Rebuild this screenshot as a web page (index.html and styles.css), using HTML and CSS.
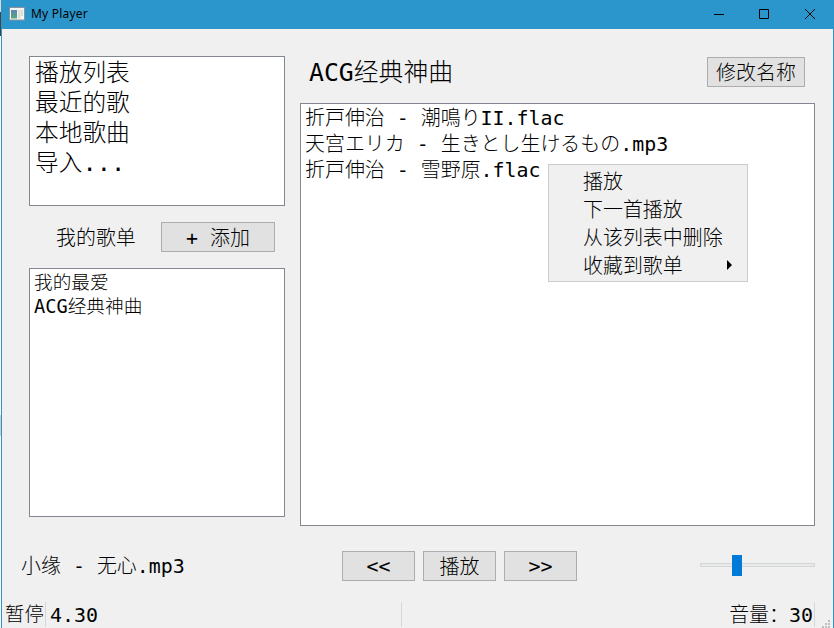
FILE: index.html
```html
<!DOCTYPE html>
<html lang="zh-CN">
<head>
<meta charset="utf-8">
<title>My Player</title>
<link rel="stylesheet" href="styles.css">
</head>
<body>
<div class="window">
  <header class="titlebar">
    <svg class="app-icon" width="16" height="14" viewBox="0 0 16 14">
      <defs><linearGradient id="g" x1="0" y1="0" x2="0" y2="1"><stop offset="0" stop-color="#5b86b5"/><stop offset="1" stop-color="#55a878"/></linearGradient></defs>
      <rect x=".5" y=".5" width="15" height="12.5" fill="#f4f4f2" stroke="#8b9299"/>
      <rect x="2" y="3" width="6" height="8.5" fill="url(#g)"/>
      <rect x="9" y="3" width="2.5" height="8.5" fill="#dcdedd"/>
      <rect x="12" y="3" width="2" height="6" fill="#d3e0da"/>
    </svg>
    <span class="title">My Player</span>
    <svg class="controls" width="104" height="12" viewBox="0 0 104 12" fill="none" stroke="#000">
      <path d="M0 6.5h10M45.500 1.500h9v9h-9zM91 1l10 10M101 1l-10 10"/>
    </svg>
  </header>
  <main class="content">
    <aside class="sidebar">
      <ul class="list library">
        <li>播放列表</li><li>最近的歌</li><li>本地歌曲</li><li>导入...</li>
      </ul>
      <div class="mine">
        <span class="label">我的歌单</span>
        <button class="btn add">+ 添加</button>
      </div>
      <ul class="list playlists">
        <li>我的最爱</li><li>ACG经典神曲</li>
      </ul>
    </aside>
    <section class="detail">
      <div class="head">
        <h1>ACG经典神曲</h1>
        <button class="btn rename">修改名称</button>
      </div>
      <ul class="list songs">
        <li>折戸伸治 - 潮鳴りII.flac</li>
        <li>天宫エリカ - 生きとし生けるもの.mp3</li>
        <li>折戸伸治 - 雪野原.flac</li>
      </ul>
    </section>
  </main>
  <div class="player">
    <span class="now">小缘 - 无心.mp3</span>
    <div class="transport">
      <button class="btn skip">&lt;&lt;</button>
      <button class="btn">播放</button>
      <button class="btn skip">&gt;&gt;</button>
    </div>
    <div class="slider"><div class="groove"></div><div class="handle"></div></div>
  </div>
  <footer class="status">
    <span class="cell state">暂停</span>
    <span class="cell time">4.30</span>
    <span class="cell volume">音量：<b>30</b></span>
    <svg class="grip" width="8" height="8" viewBox="0 0 8 8" fill="#bfbfbf"><path d="M6 0h2v2h-2zM3 3h2v2h-2zM6 3h2v2h-2zM0 6h2v2h-2zM3 6h2v2h-2zM6 6h2v2h-2z"/></svg>
  </footer>
  <ul class="menu">
    <li>播放</li><li>下一首播放</li><li>从该列表中删除</li><li class="sub">收藏到歌单</li>
  </ul>
</div>
</body>
</html>
```
FILE: styles.css
```css
* { box-sizing: border-box; }
body {
  margin: 0;
  width: 834px;
  height: 628px;
  overflow: hidden;
  background: linear-gradient(#d8d8d8 12px, #444 12px 36px, #fff 36px 415px, #ccc 415px 436px, #fff 436px);
  font: 300 19.95px/26px "DejaVu Sans Mono", "Noto Sans CJK SC", monospace;
  color: #000;
}
ul { list-style: none; margin: 0; padding: 0; }
.window {
  position: relative;
  display: flex;
  flex-direction: column;
  width: 833px;
  height: 628px;
  margin-left: 1px;
  background: #f0f0f0;
  border: solid #2b96cc;
  border-width: 0 1px;
  white-space: nowrap;
}
.titlebar {
  display: flex;
  align-items: center;
  height: 29px;
  flex: none;
  padding: 0 15px 2px 7px;
  background: #2b96cc;
  font: 400 12px/16px "Noto Sans", "Open Sans", sans-serif;
  letter-spacing: .2px;
}
.title { margin-left: 6px; }
.controls { margin-left: auto; }
.content { display: flex; gap: 15px; padding: 27px 18px 0 27px; height: 497px; flex: none; }
.sidebar { width: 256px; }
.list { background: #fff; border: 1px solid #828790; overflow: hidden; }
.library { height: 150px; padding: 1px 5px; font-size: 23.7px; line-height: 30px; }
.mine { display: flex; justify-content: space-between; align-items: center; height: 30px; margin: 16px 10px 16px 27px; }
.label { padding-top: 2px; }
.btn {
  font: inherit;
  color: inherit;
  line-height: 26px;
  height: 30px;
  padding: 1px 0 0;
  background: #e1e1e1;
  border: 1px solid #adadad;
  border-radius: 0;
}
.add { width: 114px; }
.playlists { height: 249px; padding: 2px 4px; font-size: 18.67px; line-height: 24px; }
.detail { flex: 1; }
.head { display: flex; justify-content: space-between; align-items: center; height: 32px; padding: 0 10px 0 9px; margin-bottom: 15px; }
h1 { margin: 0; padding-top: 1px; font-size: 24.8px; font-weight: 300; line-height: 32px; }
.rename { width: 98px; }
.songs { height: 423px; padding: 1px 4px; }
.player { display: flex; align-items: center; height: 30px; margin-top: 25px; padding: 0 18px 0 19px; flex: none; }
.now { width: 321px; }
.transport { display: flex; gap: 8px; }
.transport .btn { width: 73px; }
.transport .skip { padding: 0; }
.slider { display: flex; align-items: center; position: relative; width: 115px; height: 21px; margin: -1px 0 1px auto; }
.groove { width: 100%; height: 4px; background: #e7eaea; border: 1px solid #d6d6d6; }
.handle { position: absolute; left: 32px; top: 0; width: 10px; height: 21px; background: #007ad9; }
.status { display: flex; height: 25px; margin-top: 21px; flex: none; }
.cell { border-right: 1px solid #d7d7d7; line-height: 26px; }
.state { width: 44px; padding-left: 3px; font-size: 19.4px; }
.time { width: 356px; padding-left: 4px; }
.volume { width: 413px; text-align: right; padding-right: 1px; }
.volume b { font-weight: inherit; }
.grip { align-self: flex-end; margin: 0 0 -1px 7px; }
.menu {
  position: absolute;
  left: 546px;
  top: 164px;
  width: 200px;
  height: 118px;
  padding: 3px 0 1px;
  line-height: 28px;
  background: #f0f0f0;
  border: 1px solid #ccc;
}
.menu li { padding-left: 34px; }
.sub { display: flex; justify-content: space-between; align-items: center; padding-right: 15px; }
.sub::after { content: ""; margin-top: -3px; border: solid transparent; border-width: 5px 0 5px 5px; border-left-color: #000; }
```
